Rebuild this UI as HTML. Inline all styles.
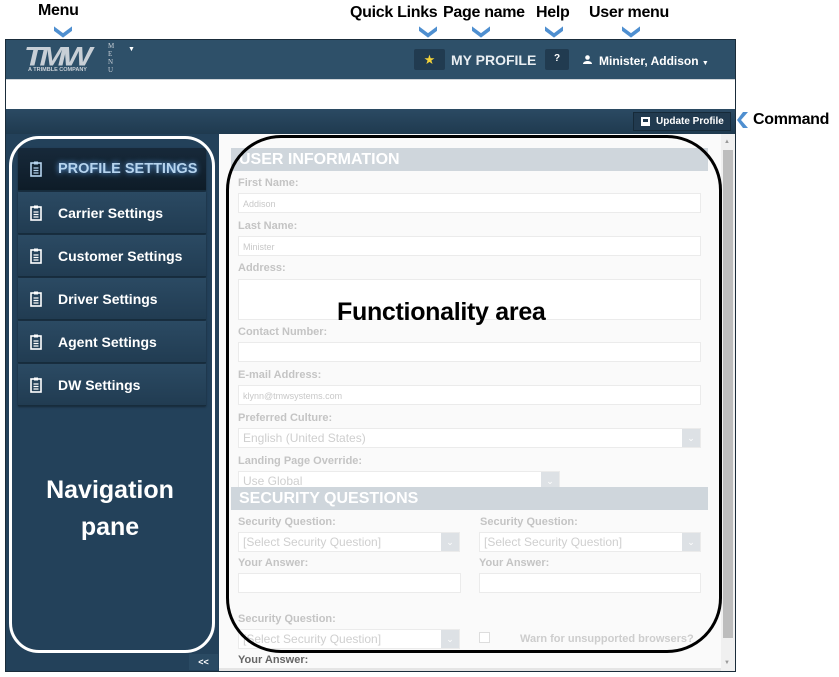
<!DOCTYPE html>
<html><head><style>
*{margin:0;padding:0;box-sizing:border-box}
body{width:839px;height:677px;background:#fff;position:relative;overflow:hidden;font-family:"Liberation Sans",Arial,sans-serif}
.a{position:absolute}
.ann{position:absolute;font-weight:bold;font-size:16px;color:#000;font-family:"Liberation Sans",sans-serif;white-space:nowrap;letter-spacing:-0.3px}
.chev{position:absolute;width:18px;height:12px}
.lbl{position:absolute;left:238px;font-size:11px;font-weight:bold;color:#c4c4c4}
.inp{position:absolute;left:238px;width:463px;height:20px;border:1px solid #ebebeb;background:#fff;font-size:9px;color:#c8c8c8;padding:5px 4px}
.sel{position:absolute;height:20px;border:1px solid #ebebeb;background:#fff;font-size:12px;color:#cfcfcf;padding:2px 4px;overflow:hidden;white-space:nowrap}
.sel i{position:absolute;right:0;top:0;width:18px;height:18px;background:#dde1e5;color:#fff;font-style:normal;font-size:9px;text-align:center;line-height:18px}
.nav{position:absolute;left:18px;width:188px;height:42px;background:linear-gradient(#2b4a63,#213c52);border-bottom:1px solid #172c3c;box-shadow:0 1px 2px rgba(0,0,0,.4);color:#fff;font-weight:bold;font-size:14px;line-height:42px;padding-left:40px}
.nav svg{position:absolute;left:12px;top:13px}
.hdr{position:absolute;left:231px;width:477px;height:23px;background:#cfd6dc;color:#fff;font-weight:bold;font-size:16px;padding-left:8px;line-height:23px}
</style></head><body>
<div class="ann" style="left:38px;top:2px">Menu</div>
<div class="ann" style="left:350px;top:4px">Quick Links</div>
<div class="ann" style="left:443px;top:4px">Page name</div>
<div class="ann" style="left:536px;top:4px">Help</div>
<div class="ann" style="left:589px;top:4px">User menu</div>
<div class="ann" style="left:753px;top:111px">Command</div>
<svg class="chev" style="left:54px;top:26px" viewBox="0 0 16 10"><path d="M0 0L8 6L16 0V4L8 10L0 4Z" fill="#4f8fd0"/></svg>
<svg class="chev" style="left:419px;top:26px" viewBox="0 0 16 10"><path d="M0 0L8 6L16 0V4L8 10L0 4Z" fill="#4f8fd0"/></svg>
<svg class="chev" style="left:472px;top:26px" viewBox="0 0 16 10"><path d="M0 0L8 6L16 0V4L8 10L0 4Z" fill="#4f8fd0"/></svg>
<svg class="chev" style="left:545px;top:26px" viewBox="0 0 16 10"><path d="M0 0L8 6L16 0V4L8 10L0 4Z" fill="#4f8fd0"/></svg>
<svg class="chev" style="left:622px;top:26px" viewBox="0 0 16 10"><path d="M0 0L8 6L16 0V4L8 10L0 4Z" fill="#4f8fd0"/></svg>
<svg class="a" style="left:737px;top:111px" width="12" height="18" viewBox="0 0 12 16"><path d="M6 0H11L4 8L11 16H6L0 8Z" fill="#4f8fd0"/></svg>

<div class="a" style="left:5px;top:39px;width:731px;height:633px;border:1px solid #1a2c3a;background:#23415a"></div>
<div class="a" style="left:6px;top:40px;width:729px;height:39px;background:#2e5069"></div>
<div class="a" style="left:24px;top:38px;font-family:'Liberation Sans';font-weight:bold;font-style:italic;font-size:32px;color:#c8cfd6;letter-spacing:-4px;transform:scaleY(0.85)">TMW</div>
<div class="a" style="left:28px;top:67px;font-size:5.5px;font-weight:bold;color:#c8cfd6">A TRIMBLE COMPANY</div>
<div class="a" style="left:108px;top:42px;font-family:'Liberation Serif';font-size:7px;line-height:8px;color:#c8cfd6;width:6px">M<br>E<br>N<br>U</div>
<div class="a" style="left:128px;top:46px;font-size:7px;color:#fff">▼</div>
<div class="a" style="left:414px;top:49px;width:31px;height:21px;background:#213b50;border-radius:2px;text-align:center;color:#f3d23a;font-size:13px;line-height:21px">★</div>
<div class="a" style="left:451px;top:52px;color:#e9eef2;font-weight:bold;font-size:14px">MY PROFILE</div>
<div class="a" style="left:545px;top:49px;width:24px;height:21px;background:#213b50;border-radius:2px;text-align:center;color:#fff;font-size:10px;font-weight:bold;line-height:19px">?</div>
<svg class="a" style="left:583px;top:55px" width="9" height="9" viewBox="0 0 9 9"><circle cx="4.5" cy="2.5" r="2.3" fill="#fff"/><path d="M0 9C0 5 9 5 9 9Z" fill="#fff"/></svg>
<div class="a" style="left:599px;top:54px;color:#fff;font-weight:bold;font-size:12px">Minister, Addison <span style="font-size:7px">▼</span></div>
<div class="a" style="left:6px;top:79px;width:729px;height:30px;background:#fff;border-top:1px solid #d0d5d9"></div>
<div class="a" style="left:6px;top:109px;width:729px;height:25px;background:linear-gradient(#2b4a63,#1f3a4f)"></div>
<div class="a" style="left:633px;top:112px;width:98px;height:19px;background:#213a4f;border:1px solid #162a39;color:#fff;font-size:10px;font-weight:bold;line-height:17px;padding-left:22px">Update Profile</div>
<div class="a" style="left:641px;top:117px;width:9px;height:9px;background:#fff;border:2px solid #fff"><div style="width:5px;height:3px;background:#213a4f"></div></div>

<div class="nav" style="top:148px;height:43px;background:linear-gradient(#17293a,#0e1c28);color:#b6d4ee;font-size:14.5px;text-shadow:0 0 6px #6ab0ff">PROFILE SETTINGS<svg width="12" height="16" viewBox="0 0 12 16"><rect x="1" y="2" width="10" height="13" fill="none" stroke="#b6d4ee" stroke-width="1.6"/><rect x="4" y="0.5" width="4" height="3" fill="#b6d4ee"/><path d="M3.5 7H8.5M3.5 9.5H8.5M3.5 12H8.5" stroke="#b6d4ee" stroke-width="1.2"/></svg></div>
<div class="nav" style="top:192px">Carrier Settings<svg width="12" height="16" viewBox="0 0 12 16"><rect x="1" y="2" width="10" height="13" fill="none" stroke="#fff" stroke-width="1.6"/><rect x="4" y="0.5" width="4" height="3" fill="#fff"/><path d="M3.5 7H8.5M3.5 9.5H8.5M3.5 12H8.5" stroke="#fff" stroke-width="1.2"/></svg></div>
<div class="nav" style="top:235px">Customer Settings<svg width="12" height="16" viewBox="0 0 12 16"><rect x="1" y="2" width="10" height="13" fill="none" stroke="#fff" stroke-width="1.6"/><rect x="4" y="0.5" width="4" height="3" fill="#fff"/><path d="M3.5 7H8.5M3.5 9.5H8.5M3.5 12H8.5" stroke="#fff" stroke-width="1.2"/></svg></div>
<div class="nav" style="top:278px">Driver Settings<svg width="12" height="16" viewBox="0 0 12 16"><rect x="1" y="2" width="10" height="13" fill="none" stroke="#fff" stroke-width="1.6"/><rect x="4" y="0.5" width="4" height="3" fill="#fff"/><path d="M3.5 7H8.5M3.5 9.5H8.5M3.5 12H8.5" stroke="#fff" stroke-width="1.2"/></svg></div>
<div class="nav" style="top:321px">Agent Settings<svg width="12" height="16" viewBox="0 0 12 16"><rect x="1" y="2" width="10" height="13" fill="none" stroke="#fff" stroke-width="1.6"/><rect x="4" y="0.5" width="4" height="3" fill="#fff"/><path d="M3.5 7H8.5M3.5 9.5H8.5M3.5 12H8.5" stroke="#fff" stroke-width="1.2"/></svg></div>
<div class="nav" style="top:364px">DW Settings<svg width="12" height="16" viewBox="0 0 12 16"><rect x="1" y="2" width="10" height="13" fill="none" stroke="#fff" stroke-width="1.6"/><rect x="4" y="0.5" width="4" height="3" fill="#fff"/><path d="M3.5 7H8.5M3.5 9.5H8.5M3.5 12H8.5" stroke="#fff" stroke-width="1.2"/></svg></div>
<div class="a" style="left:189px;top:654px;width:29px;height:16px;background:#2a4a63;color:#fff;font-size:9px;font-weight:bold;text-align:center;line-height:16px">&lt;&lt;</div>

<div class="a" style="left:219px;top:134px;width:502px;height:535px;background:#fafafa"></div>
<div class="a" style="left:721px;top:134px;width:14px;height:537px;background:#f0f0f0"></div>
<div class="a" style="left:723px;top:150px;width:10px;height:488px;background:#bdbdbd"></div>
<div class="a" style="left:724px;top:139px;font-size:6px;color:#999">▲</div>
<div class="a" style="left:724px;top:660px;font-size:6px;color:#999">▼</div>
<div class="hdr" style="top:148px">USER INFORMATION</div>
<div class="lbl" style="top:177px">First Name:</div>
<div class="inp" style="top:193px">Addison</div>
<div class="lbl" style="top:220px">Last Name:</div>
<div class="inp" style="top:236px">Minister</div>
<div class="lbl" style="top:262px">Address:</div>
<div class="inp" style="top:279px;height:41px"></div>
<div class="lbl" style="top:326px">Contact Number:</div>
<div class="inp" style="top:342px"></div>
<div class="lbl" style="top:369px">E-mail Address:</div>
<div class="inp" style="top:385px">klynn@tmwsystems.com</div>
<div class="lbl" style="top:412px">Preferred Culture:</div>
<div class="sel" style="left:238px;top:428px;width:463px">English (United States)<i>⌄</i></div>
<div class="lbl" style="top:455px">Landing Page Override:</div>
<div class="sel" style="left:238px;top:471px;width:322px;height:17px">Use Global<i>⌄</i></div>
<div class="hdr" style="top:487px">SECURITY QUESTIONS</div>
<div class="lbl" style="top:516px">Security Question:</div>
<div class="lbl" style="top:516px;left:480px">Security Question:</div>
<div class="sel" style="left:238px;top:532px;width:222px">[Select Security Question]<i>⌄</i></div>
<div class="sel" style="left:479px;top:532px;width:222px">[Select Security Question]<i>⌄</i></div>
<div class="lbl" style="top:557px">Your Answer:</div>
<div class="lbl" style="top:557px;left:479px">Your Answer:</div>
<div class="inp" style="top:573px;width:223px"></div>
<div class="inp" style="top:573px;left:479px;width:222px"></div>
<div class="lbl" style="top:613px">Security Question:</div>
<div class="sel" style="left:238px;top:629px;width:222px">[Select Security Question]<i>⌄</i></div>
<div class="a" style="left:479px;top:632px;width:11px;height:11px;border:1px solid #ddd;background:#fff"></div>
<div class="lbl" style="top:633px;left:520px;color:#cdcdcd">Warn for unsupported browsers?</div>
<div class="lbl" style="top:654px;color:#666">Your Answer:</div>
<div class="a" style="left:219px;top:668px;width:502px;height:3px;background:#e5e5e5"></div>

<div class="a" style="left:9px;top:136px;width:206px;height:517px;border:3px solid #fff;border-radius:30px"></div>
<div class="a" style="left:226px;top:135px;width:496px;height:518px;border:3px solid #000;border-radius:55px"></div>
<div class="a" style="left:337px;top:298px;font-size:25px;font-weight:bold;color:#000;letter-spacing:-0.3px">Functionality area</div>
<div class="a" style="left:34px;top:472px;width:152px;text-align:center;font-size:25px;font-weight:bold;color:#fff;line-height:37px">Navigation<br>pane</div>
</body></html>
